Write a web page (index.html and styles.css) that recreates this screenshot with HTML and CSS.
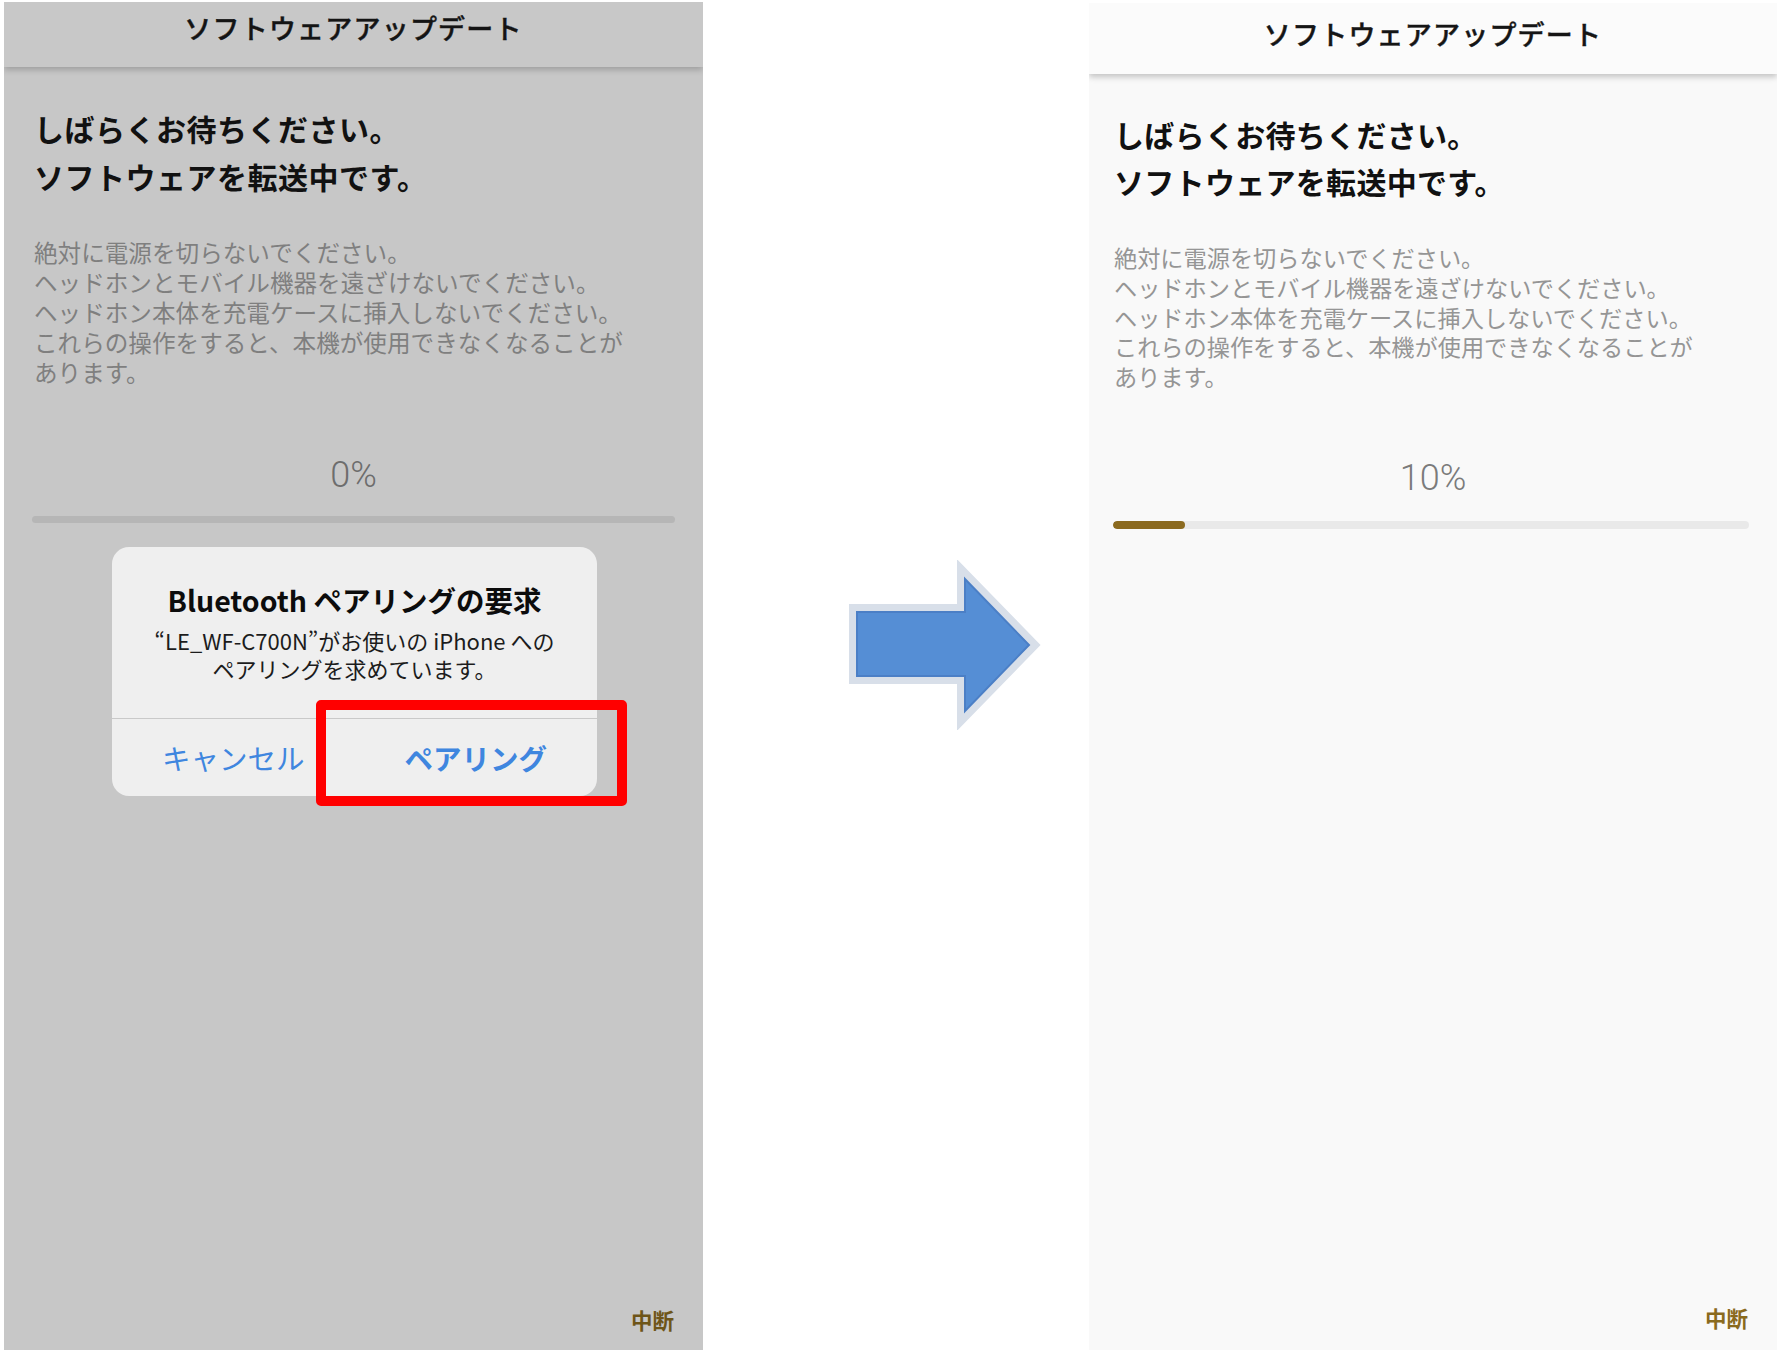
FILE: index.html
```html
<!DOCTYPE html>
<html lang="ja">

<head>
    <meta charset="UTF-8">
    <meta name="viewport" content="width=device-width, initial-scale=1.0">
    <title>ソフトウェアアップデート</title>
    <link rel="stylesheet" href="styles.css">
</head>

<body>
    <div class="page">
        <!-- before: pairing request over the dimmed screen -->
        <div class="screen dimmed">
            <div class="nav-bar">
                <h1>ソフトウェアアップデート</h1>
            </div>
            <p class="headline">しばらくお待ちください。<br>ソフトウェアを転送中です。</p>
            <p class="notice">絶対に電源を切らないでください。<br>ヘッドホンとモバイル機器を遠ざけないでください。<br>ヘッドホン本体を充電ケースに挿入しないでください。<br>これらの操作をすると、本機が使用できなくなることが<br>あります。</p>
            <div class="percent">0%</div>
            <div class="track"><div class="fill" style="width: 0%"></div></div>
            <div class="abort">中断</div>

            <div class="alert">
                <div class="alert-body">
                    <div class="alert-title">Bluetooth ペアリングの要求</div>
                    <div class="alert-text">“LE_WF-C700N”がお使いの iPhone への<br>ペアリングを求めています。</div>
                </div>
                <div class="alert-buttons">
                    <div class="alert-button">キャンセル</div>
                    <div class="alert-button primary">ペアリング</div>
                </div>
            </div>
            <div class="highlight"></div>
        </div>

        <svg class="arrow" width="200" height="170" viewBox="0 0 200 170">
            <polygon points="8,48 116,48 116,9 190,85 116,161 116,120 8,120"
                fill="#558ed5" stroke="#d8dfe9" stroke-width="8" stroke-linejoin="miter" />
            <polygon points="12,52 120,52 120,19 184,85 120,151 120,116 12,116"
                fill="none" stroke="#4b7fc6" stroke-width="2" />
        </svg>

        <!-- after: transfer running -->
        <div class="screen">
            <div class="nav-bar">
                <h1>ソフトウェアアップデート</h1>
            </div>
            <p class="headline">しばらくお待ちください。<br>ソフトウェアを転送中です。</p>
            <p class="notice">絶対に電源を切らないでください。<br>ヘッドホンとモバイル機器を遠ざけないでください。<br>ヘッドホン本体を充電ケースに挿入しないでください。<br>これらの操作をすると、本機が使用できなくなることが<br>あります。</p>
            <div class="percent">10%</div>
            <div class="track"><div class="fill" style="width: 11.3%"></div></div>
            <div class="abort">中断</div>
        </div>
    </div>
</body>

</html>
```

FILE: styles.css
```css
body {
    margin: 0;
    padding: 0;
    background-color: #fff;
    font-family: "Noto Sans CJK JP", "Noto Sans", sans-serif;
}

.page {
    display: flex;
    align-items: flex-start;
    padding-left: 4px;
}

/* phone screen */
.screen {
    position: relative;
    display: flex;
    flex-direction: column;
    width: 688px;
    height: 1347px;
    margin-top: 3px;
    background-color: #f9f9f9;
    overflow: hidden;
    white-space: nowrap;
}

.nav-bar {
    height: 71px;
    padding-top: 13px;
    box-sizing: border-box;
    background-color: #fbfbfb;
    box-shadow: 0 3px 6px rgba(0, 0, 0, 0.22);
    text-align: center;
}

.nav-bar h1 {
    margin: 0;
    font-size: 27px;
    line-height: 36px;
    font-weight: 500;
    letter-spacing: 1.2px;
    color: #151515;
    -webkit-text-stroke: 0.4px #151515;
}

.headline {
    margin: 37px 0 0 25px;
    font-size: 30px;
    line-height: 47px;
    font-weight: 700;
    letter-spacing: 0.3px;
    color: #111;
}

.notice {
    margin: 38px 0 0 25px;
    font-size: 23.2px;
    line-height: 29.8px;
    color: #959595;
}

.percent {
    margin-top: 64px;
    text-align: center;
    font-family: Roboto, "Noto Sans", sans-serif;
    font-weight: 300;
    font-size: 36px;
    line-height: 44px;
    color: #7b7b7b;
}

.track {
    height: 8px;
    margin: 21px 28px 0 24px;
    border-radius: 4px;
    background-color: #e9e9e9;
    overflow: hidden;
}

.fill {
    height: 100%;
    border-radius: 4px;
    background-color: #8b6a1f;
}

.abort {
    margin-top: auto;
    margin-bottom: 17px;
    align-self: flex-end;
    padding-right: 29px;
    font-size: 21.5px;
    line-height: 30px;
    font-weight: 700;
    color: #8a6a1e;
}

.arrow {
    margin: 560px 0 0 142px;
}

.screen:last-child {
    margin-left: 44px;
}

/* dimmed screen behind the alert */
.dimmed {
    width: 699px;
    height: 1348px;
    margin-top: 2px;
    background-color: #c7c7c7;
}

.dimmed .nav-bar {
    height: 65px;
    padding-top: 8px;
    background-color: #c8c8c8;
    box-shadow: 0 3px 6px rgba(0, 0, 0, 0.2);
}

.dimmed .nav-bar h1 {
    color: #141414;
}

.dimmed .headline {
    margin: 37px 0 0 30px;
    line-height: 48px;
    letter-spacing: 0.5px;
}

.dimmed .notice {
    margin: 37px 0 0 30px;
    font-size: 23.6px;
    line-height: 30px;
    color: #7f7f7f;
}

.dimmed .percent {
    margin-top: 66px;
    color: #6d6d6d;
}

.dimmed .track {
    height: 7px;
    margin: 19px 28px 0 28px;
    background-color: #b6b6b6;
}

.dimmed .abort {
    margin-bottom: 15px;
    color: #6e5518;
}

/* pairing alert */
.alert {
    position: absolute;
    left: 108px;
    top: 545px;
    width: 485px;
    height: 249px;
    border-radius: 17px;
    background-color: #efefef;
    display: flex;
    flex-direction: column;
    text-align: center;
}

.alert-body {
    padding: 36px 10px 36px;
    border-bottom: 1px solid #c9c9c9;
}

.alert-title {
    font-size: 28.5px;
    line-height: 34px;
    font-weight: 700;
    color: #0c0c0c;
}

.alert-text {
    margin-top: 9px;
    font-size: 22px;
    line-height: 28px;
    color: #1c1c1c;
}

.alert-buttons {
    display: flex;
    flex: 1;
}

.alert-button {
    flex: 1;
    display: flex;
    align-items: center;
    justify-content: center;
    font-size: 28.5px;
    color: #3f86df;
}

.alert-button.primary {
    font-weight: 700;
}

.highlight {
    position: absolute;
    left: 312px;
    top: 698px;
    width: 311px;
    height: 106px;
    box-sizing: border-box;
    border: 10px solid #ff0000;
    border-radius: 5px;
}
```
